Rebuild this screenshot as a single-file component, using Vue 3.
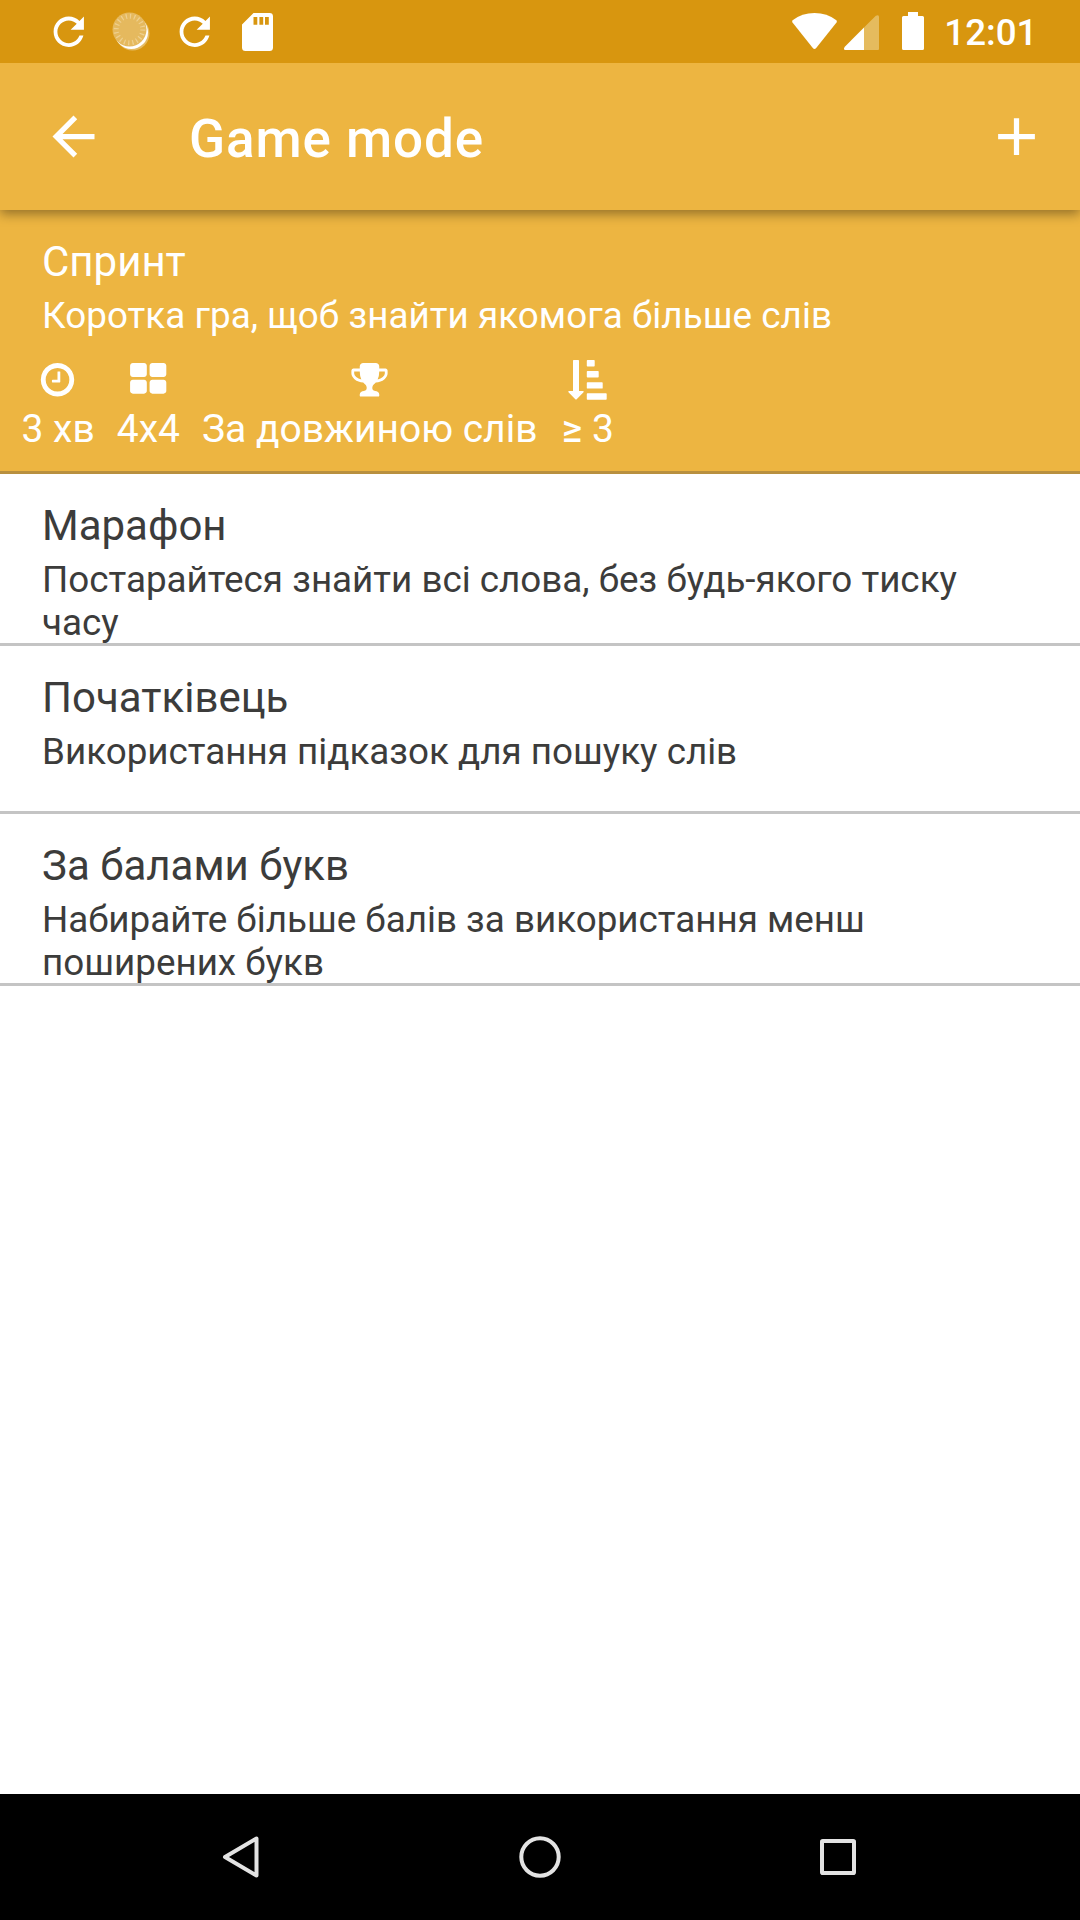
<script setup>
const modes = [
  { title: 'Марафон', text: 'Постарайтеся знайти всі слова, без будь-якого тиску часу', tall: true },
  { title: 'Початківець', text: 'Використання підказок для пошуку слів', tall: false },
  { title: 'За балами букв', text: 'Набирайте більше балів за використання менш поширених букв', tall: true },
]
</script>

<template>
  <div class="screen">
    <header class="status">
      <div class="notifications">
        <svg class="refresh" viewBox="0 0 24 24"><path d="M17.65 6.35C16.2 4.9 14.21 4 12 4c-4.42 0-7.99 3.58-7.99 8s3.57 8 7.99 8c3.73 0 6.84-2.55 7.73-6h-2.08c-.82 2.33-3.04 4-5.65 4-3.31 0-6-2.69-6-6s2.69-6 6-6c1.66 0 3.14.69 4.22 1.78L13 11h7V4l-2.35 2.35z" /></svg>
        <svg class="coin" viewBox="0 0 40 40">
          <circle cx="20.5" cy="21.5" r="17" fill="#e5bb62" />
          <circle cx="19.3" cy="20.3" r="16.7" fill="#fff" />
          <circle cx="17.5" cy="17.5" r="17" fill="#e5b95e" />
          <circle cx="17.5" cy="17.5" r="13.3" fill="none" stroke="#efd08f" stroke-width="5" stroke-dasharray="1.2 2.98" />
        </svg>
        <svg class="refresh" viewBox="0 0 24 24"><path d="M17.65 6.35C16.2 4.9 14.21 4 12 4c-4.42 0-7.99 3.58-7.99 8s3.57 8 7.99 8c3.73 0 6.84-2.55 7.73-6h-2.08c-.82 2.33-3.04 4-5.65 4-3.31 0-6-2.69-6-6s2.69-6 6-6c1.66 0 3.14.69 4.22 1.78L13 11h7V4l-2.35 2.35z" /></svg>
        <svg class="sd" viewBox="0 0 31 38"><path fill-rule="evenodd" d="M11.5 0H27.5a3.5 3.5 0 0 1 3.5 3.5V34.5a3.5 3.5 0 0 1-3.5 3.5H3.5a3.5 3.5 0 0 1-3.5-3.5V11.5zM11.5 4v7.7h3.8V4zM17.4 4v7.7h3.8V4zM23 4v7.7h3.8V4z" /></svg>
      </div>
      <div class="system">
        <svg class="wifi" viewBox="0 0 45 36"><path d="M0.6 7.2Q10 0 22.5 0T44.4 7.2Q45.2 8.3 44.5 9.6L24.2 35Q22.5 37 20.8 35L.5 9.6Q-.2 8.3.6 7.2z" /></svg>
        <svg class="signal" viewBox="0 0 35 35"><path fill="#e5bb5e" d="M20 12.5 31.8.8Q35-1 35 2V34a1 1 0 0 1-1 1H20z" /><path d="M20 12.5V35H1.2Q-1 34.5.8 31.8z" /></svg>
        <svg class="battery" viewBox="0 0 22 38"><path d="M6 0H16V4H20.5A1.5 1.5 0 0 1 22 5.5V36.5A1.5 1.5 0 0 1 20.5 38H1.5A1.5 1.5 0 0 1 0 36.5V5.5A1.5 1.5 0 0 1 1.5 4H6z" /></svg>
        <span class="clock">12:01</span>
      </div>
    </header>

    <nav class="appbar">
      <svg class="action" viewBox="0 0 24 24"><path d="M20 11H7.83l5.59-5.59L12 4l-8 8 8 8 1.41-1.41L7.83 13H20v-2z" /></svg>
      <h1>Game mode</h1>
      <svg class="action add" viewBox="0 0 24 24"><path d="M19 13h-6v6h-2v-6H5v-2h6V5h2v6h6v2z" /></svg>
    </nav>

    <main class="list">
      <section class="mode selected">
        <h2>Спринт</h2>
        <p>Коротка гра, щоб знайти якомога більше слів</p>
        <div class="stats">
          <div class="stat">
            <svg viewBox="0 0 1792 1792"><path d="M1024 544v448q0 14-9 23t-23 9h-320q-14 0-23-9t-9-23v-64q0-14 9-23t23-9h224v-352q0-14 9-23t23-9h64q14 0 23 9t9 23zm416 352q0-148-73-273t-198-198-273-73-273 73-198 198-73 273 73 273 198 198 273 73 273-73 198-198 73-273zm224 0q0 209-103 385.5t-279.5 279.5-385.5 103-385.5-103-279.5-279.5-103-385.5 103-385.5 279.5-279.5 385.5-103 385.5 103 279.5 279.5 103 385.5z" /></svg>
            <span>3 хв</span>
          </div>
          <div class="stat">
            <svg viewBox="0 0 1792 1792"><path d="M864 1024v384q0 52-38 90t-90 38h-512q-52 0-90-38t-38-90v-384q0-52 38-90t90-38h512q52 0 90 38t38 90zm0-768v384q0 52-38 90t-90 38h-512q-52 0-90-38t-38-90v-384q0-52 38-90t90-38h512q52 0 90 38t38 90zm896 768v384q0 52-38 90t-90 38h-512q-52 0-90-38t-38-90v-384q0-52 38-90t90-38h512q52 0 90 38t38 90zm0-768v384q0 52-38 90t-90 38h-512q-52 0-90-38t-38-90v-384q0-52 38-90t90-38h512q52 0 90 38t38 90z" /></svg>
            <span>4x4</span>
          </div>
          <div class="stat">
            <svg viewBox="0 0 1792 1792"><path d="M522 883q-74-162-74-371h-256v96q0 78 94.5 162t235.5 113zm1078-275v-96h-256q0 209-74 371 141-29 235.5-113t94.5-162zm128-128v128q0 71-41.5 143t-112 130-173 97.5-215.5 44.5q-42 54-95 95-38 34-52.5 72.5t-14.5 89.5q0 54 30.5 91t97.5 37q75 0 133.5 45.5t58.5 114.5v64q0 14-9 23t-23 9h-832q-14 0-23-9t-9-23v-64q0-69 58.5-114.5t133.5-45.5q67 0 97.5-37t30.5-91q0-51-14.5-89.5t-52.5-72.5q-53-41-95-95-113-5-215.5-44.5t-173-97.5-112-130-41.5-143v-128q0-40 28-68t68-28h288v-96q0-66 47-113t113-47h576q66 0 113 47t47 113v96h288q40 0 68 28t28 68z" /></svg>
            <span>За довжиною слів</span>
          </div>
          <div class="stat">
            <svg viewBox="0 0 39 39.5"><path d="M5 .7Q5 0 5.7 0H10.3Q11 0 11 .7V31H15.3Q16 31.5 15.5 32.3L8.7 39.2Q8 39.7 7.3 39.2L.5 32.3Q0 31.5 .7 31H5zM19.5 0h6.5q.7 0 .7.7v5q0 .7-.7.7h-6.5q-.7 0-.7-.7v-5q0-.7.7-.7zM19.5 11h10.5q.7 0 .7.7v5q0 .7-.7.7h-10.5q-.7 0-.7-.7v-5q0-.7.7-.7zM19.5 22.2h14.5q.7 0 .7.7v5q0 .7-.7.7h-14.5q-.7 0-.7-.7v-5q0-.7.7-.7zM19.5 33.3h18.5q.7 0 .7.7v5q0 .7-.7.7h-18.5q-.7 0-.7-.7v-5q0-.7.7-.7z" /></svg>
            <span><span class="gte">≥</span> 3</span>
          </div>
        </div>
      </section>
      <section v-for="mode in modes" :key="mode.title" class="mode" :class="{ tall: mode.tall }">
        <h2>{{ mode.title }}</h2>
        <p>{{ mode.text }}</p>
      </section>
    </main>

    <footer class="navbar">
      <svg viewBox="0 0 46 46"><path d="M37.5 4.5V41.5L6 23z" /></svg>
      <svg viewBox="0 0 46 46"><circle cx="23" cy="23" r="18.7" /></svg>
      <svg viewBox="0 0 46 46"><rect x="7" y="7" width="32" height="32" rx=".8" /></svg>
    </footer>
  </div>
</template>

<style>
body { margin: 0; background: #fff; }
</style>

<style scoped>
.screen {
  display: flex;
  flex-direction: column;
  width: 1080px;
  height: 1920px;
  overflow: hidden;
  background: #fff;
  color: #3c3c3b;
  font-family: Roboto, "Noto Sans", sans-serif;
}
svg { display: block; flex: none; fill: #fff; }
.status {
  position: relative;
  z-index: 2;
  display: flex;
  justify-content: space-between;
  box-sizing: border-box;
  height: 63px;
  padding: 0 42.5px 0 45.5px;
  background: #d8960f;
}
.notifications { display: flex; align-items: flex-start; }
.refresh { width: 45.5px; height: 45.5px; margin-top: 8.5px; }
.coin { width: 40px; height: 40px; margin: 12px 19.5px 0 21px; }
.sd { width: 31px; height: 38px; margin: 12.5px 0 0 25px; }
.system { display: flex; align-items: flex-start; color: #fff; }
.wifi { width: 45px; height: 36px; margin-top: 13px; }
.signal { width: 35px; height: 35px; margin: 15px 0 0 7px; }
.battery { width: 22px; height: 38px; margin: 12px 0 0 23px; }
.clock { margin: 11px 0 0 20.5px; font-size: 36.75px; line-height: 44px; font-weight: 500; }
.appbar {
  position: relative;
  display: flex;
  align-items: center;
  box-sizing: border-box;
  height: 147px;
  padding: 0 32px 0 42px;
  background: #edb541;
  box-shadow: 0 4px 11px rgba(0, 0, 0, .38);
  z-index: 1;
}
.action { width: 63px; height: 63px; }
.add { margin-left: auto; }
h1 {
  margin: 5px 0 0 84px;
  color: #fff;
  font-size: 53px;
  line-height: 64px;
  font-weight: 500;
  letter-spacing: .9px;
}
.list { flex: 1; }
.mode {
  box-sizing: border-box;
  height: 168px;
  padding: 27px 42px 0;
  border-bottom: 3px solid #c4c4c4;
}
.tall { height: 172px; }
.selected {
  height: 264px;
  background: #edb541;
  border-bottom-color: #b8903f;
  color: #fff;
}
h2 { margin: 0; font-size: 42px; line-height: 50px; font-weight: 400; }
p { margin: 7px 0 0; font-size: 36.8px; line-height: 43px; }
.selected p { letter-spacing: .05px; }
.stats { display: flex; gap: 22px; margin: 23px 0 0 -20.5px; }
.stat { display: flex; flex-direction: column; align-items: center; font-size: 39px; line-height: 46px; }
.stat:last-child { margin-left: 2.5px; }
.stat svg { width: 39px; height: 39.5px; margin-right: 1px; }
.stat span { margin-top: 6px; }
.stat .gte { font-weight: 500; }
.navbar {
  display: flex;
  align-items: center;
  justify-content: space-between;
  box-sizing: border-box;
  height: 126px;
  padding: 0 219px;
  background: #000;
}
.navbar svg { width: 46px; height: 46px; fill: none; stroke: #e3e3e3; stroke-width: 4; stroke-linejoin: round; }
</style>
